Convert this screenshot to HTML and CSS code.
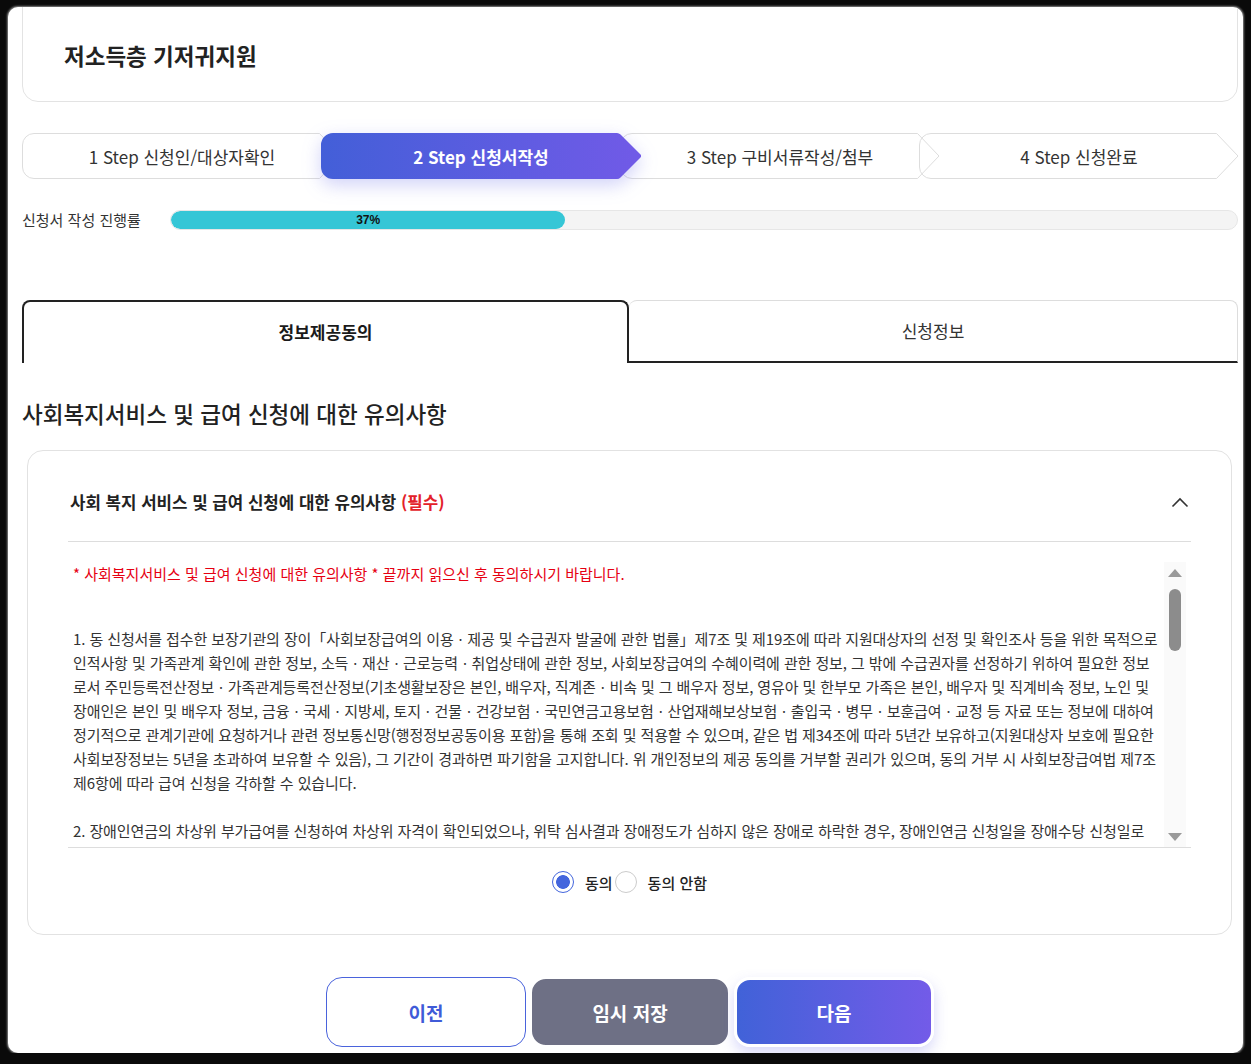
FILE: index.html
```html
<!DOCTYPE html>
<html lang="ko">

<head>
    <meta charset="UTF-8">
    <meta name="viewport" content="width=device-width, initial-scale=1.0">
    <title>저소득층 기저귀지원</title>
    <link rel="stylesheet" href="styles.css">
</head>

<body>
    <div class="frame">
        <div class="page">
            <!-- Title -->
            <div class="title-card">
                <h1>저소득층 기저귀지원</h1>
            </div>

            <!-- Steps -->
            <ol class="steps">
                <li class="step">
                    <svg class="step-shape" width="320" height="46" viewBox="0 0 320 46">
                        <path d="M12 0.5H297.5L319 23L297.5 45.5H12A11.5 11.5 0 0 1 0.5 34V12A11.5 11.5 0 0 1 12 0.5Z" fill="none" stroke="#dddddd" />
                    </svg>
                    <span>1 Step 신청인/대상자확인</span>
                </li>
                <li class="step active">
                    <svg class="step-shape" width="320" height="46" viewBox="0 0 320 46">
                        <defs>
                            <linearGradient id="stepGrad" x1="0" y1="0" x2="1" y2="0">
                                <stop offset="0" stop-color="#435fd8" />
                                <stop offset="1" stop-color="#715ae7" />
                            </linearGradient>
                        </defs>
                        <path d="M12 0H296Q298 0 299.5 1.5L319.5 21.6Q321 23 319.5 24.4L299.5 44.5Q298 46 296 46H12A12 12 0 0 1 0 34V12A12 12 0 0 1 12 0Z" fill="url(#stepGrad)" />
                    </svg>
                    <span>2 Step 신청서작성</span>
                </li>
                <li class="step">
                    <svg class="step-shape" width="320" height="46" viewBox="0 0 320 46">
                        <path d="M12 0.5H297.5L319 23L297.5 45.5H12A11.5 11.5 0 0 1 0.5 34V12A11.5 11.5 0 0 1 12 0.5Z" fill="none" stroke="#dddddd" />
                    </svg>
                    <span>3 Step 구비서류작성/첨부</span>
                </li>
                <li class="step">
                    <svg class="step-shape" width="320" height="46" viewBox="0 0 320 46">
                        <path d="M12 0.5H297.5L319 23L297.5 45.5H12A11.5 11.5 0 0 1 0.5 34V12A11.5 11.5 0 0 1 12 0.5Z" fill="none" stroke="#dddddd" />
                    </svg>
                    <span>4 Step 신청완료</span>
                </li>
            </ol>

            <!-- Progress -->
            <div class="progress">
                <span class="progress-label">신청서 작성 진행률</span>
                <div class="progress-bar">
                    <div class="progress-fill" style="width: 37%;">37%</div>
                </div>
            </div>

            <!-- Tabs -->
            <div class="tabs">
                <button class="tab active">정보제공동의</button>
                <button class="tab">신청정보</button>
            </div>

            <h2 class="section-title">사회복지서비스 및 급여 신청에 대한 유의사항</h2>

            <!-- Agreement card -->
            <div class="agree-card">
                <div class="agree-head">
                    <h3>사회 복지 서비스 및 급여 신청에 대한 유의사항 <em>(필수)</em></h3>
                    <svg class="chevron" width="18" height="12" viewBox="0 0 18 12">
                        <polyline points="1.5,10.5 9,3 16.5,10.5" fill="none" stroke="#333333" stroke-width="1.6" />
                    </svg>
                </div>
                <div class="agree-body">
                    <div class="agree-scroll">
                        <p class="notice">* 사회복지서비스 및 급여 신청에 대한 유의사항 * 끝까지 읽으신 후 동의하시기 바랍니다.</p>
                        <p>1. 동 신청서를 접수한 보장기관의 장이「사회보장급여의 이용ㆍ제공 및 수급권자 발굴에 관한 법률」제7조 및 제19조에 따라 지원대상자의 선정 및 확인조사 등을 위한 목적으로<br>인적사항 및 가족관계 확인에 관한 정보, 소득ㆍ재산ㆍ근로능력ㆍ취업상태에 관한 정보, 사회보장급여의 수혜이력에 관한 정보, 그 밖에 수급권자를 선정하기 위하여 필요한 정보<br>로서 주민등록전산정보ㆍ가족관계등록전산정보(기초생활보장은 본인, 배우자, 직계존ㆍ비속 및 그 배우자 정보, 영유아 및 한부모 가족은 본인, 배우자 및 직계비속 정보, 노인 및<br>장애인은 본인 및 배우자 정보, 금융ㆍ국세ㆍ지방세, 토지ㆍ건물ㆍ건강보험ㆍ국민연금고용보험ㆍ산업재해보상보험ㆍ출입국ㆍ병무ㆍ보훈급여ㆍ교정 등 자료 또는 정보에 대하여<br>정기적으로 관계기관에 요청하거나 관련 정보통신망(행정정보공동이용 포함)을 통해 조회 및 적용할 수 있으며, 같은 법 제34조에 따라 5년간 보유하고(지원대상자 보호에 필요한<br>사회보장정보는 5년을 초과하여 보유할 수 있음), 그 기간이 경과하면 파기함을 고지합니다. 위 개인정보의 제공 동의를 거부할 권리가 있으며, 동의 거부 시 사회보장급여법 제7조<br>제6항에 따라 급여 신청을 각하할 수 있습니다.</p>
                        <p>2. 장애인연금의 차상위 부가급여를 신청하여 차상위 자격이 확인되었으나, 위탁 심사결과 장애정도가 심하지 않은 장애로 하락한 경우, 장애인연금 신청일을 장애수당 신청일로<br>보아 장애수당 지급 여부를 결정하는 것에 동의합니다.</p>
                        <p>3. 신청한 급여의 수급자로 결정된 이후에도 보장기관의 장이 정기적으로 실시하는 확인조사에 성실히 응하여야 하며, 소득ㆍ재산ㆍ가구원 등의 변동사항이 있는 경우에는 지체 없이 관할 읍ㆍ면ㆍ동 주민센터 또는 시ㆍ군ㆍ구청에 신고하여야 합니다.</p>
                        <p>4. 거짓이나 그 밖의 부정한 방법으로 급여를 받거나 타인으로 하여금 급여를 받게 한 경우에는 관계 법령에 따라 지급된 급여가 환수되며, 벌칙이 적용될 수 있습니다.</p>
                        <p>5. 신청서에 기재한 내용과 제출한 서류가 사실과 다를 경우 급여의 결정이 취소되거나 지급이 중지될 수 있으며, 이에 따른 불이익은 신청인에게 있음을 확인합니다.</p>
                        <p>6. 저소득층 기저귀 지원 사업은 예산의 범위 내에서 지원되며, 지원 기준 및 금액은 해당 연도 사업지침에 따라 변경될 수 있습니다.</p>
                    </div>
                    <div class="scrollbar" aria-hidden="true">
                        <span class="sb-up"></span>
                        <span class="sb-thumb"></span>
                        <span class="sb-down"></span>
                    </div>
                </div>
                <div class="agree-radios">
                    <label class="radio">
                        <input type="radio" name="agree" checked>
                        <span>동의</span>
                    </label>
                    <label class="radio">
                        <input type="radio" name="agree">
                        <span>동의 안함</span>
                    </label>
                </div>
            </div>

            <!-- Buttons -->
            <div class="actions">
                <button class="btn btn-prev">이전</button>
                <button class="btn btn-save">임시 저장</button>
                <button class="btn btn-next">다음</button>
            </div>
        </div>
    </div>
</body>

</html>
```

FILE: styles.css
```css
body {
    margin: 0;
    padding: 0;
    background-color: #0a0a0a;
    font-family: "Noto Sans CJK KR", "Noto Sans", sans-serif;
    color: #222222;
}

.frame {
    width: 1235px;
    height: 1046px;
    margin: 7px 0 0 8px;
    background-color: #ffffff;
    border-radius: 10px;
    overflow: hidden;
    box-shadow: 0 0 2px 1px rgba(255, 255, 255, 0.5);
}

.page {
    padding: 0 5px 0 14px;
}
/* Title */

.title-card {
    box-sizing: border-box;
    height: 125px;
    margin-top: -30px;
    padding: 0 41px 30px;
    display: flex;
    align-items: flex-end;
    border: 1px solid #e3e3e3;
    border-radius: 16px;
}

.title-card h1 {
    margin: 0;
    font-size: 22.5px;
    line-height: 32px;
    font-weight: bold;
    color: #222222;
}
/* Steps */

.steps {
    display: flex;
    margin: 31px 0 0;
    padding: 0;
    list-style: none;
}

.step {
    position: relative;
    flex: none;
    width: 320px;
    height: 46px;
    display: flex;
    align-items: center;
    justify-content: center;
    font-size: 17px;
    color: #333333;
    z-index: 2;
}

.step + .step {
    margin-left: -21px;
}

.step:first-child {
    z-index: 3;
}

.step:last-child {
    z-index: 1;
}

.step.active {
    z-index: 5;
    color: #ffffff;
    font-weight: bold;
}

.step-shape {
    position: absolute;
    top: 0;
    left: 0;
}

.step.active .step-shape {
    filter: drop-shadow(0 6px 9px rgba(90, 92, 230, 0.28));
}

.step span {
    position: relative;
}
/* Progress */

.progress {
    display: flex;
    align-items: center;
    margin-top: 30px;
}

.progress-label {
    width: 148px;
    font-size: 15px;
    color: #333333;
}

.progress-bar {
    flex: 1;
    box-sizing: border-box;
    height: 20px;
    background-color: #f4f4f4;
    border: 1px solid #e6e6e6;
    border-radius: 10px;
    overflow: hidden;
}

.progress-fill {
    height: 100%;
    background-color: #35c6d6;
    border-radius: 10px;
    font-family: "Liberation Sans", Arial, sans-serif;
    font-size: 12px;
    font-weight: bold;
    line-height: 18px;
    text-align: center;
    color: #111111;
}
/* Tabs */

.tabs {
    display: flex;
    margin-top: 70px;
}

.tab {
    flex: 1;
    box-sizing: border-box;
    height: 63px;
    padding: 0 0 2px;
    background: none;
    font-family: inherit;
    font-size: 17px;
    color: #333333;
    border: 1px solid #dddddd;
    border-left: none;
    border-bottom: 2px solid #222222;
    border-radius: 8px 8px 0 0;
    cursor: pointer;
}

.tab.active {
    flex: none;
    width: 607px;
    border: 2px solid #222222;
    border-bottom: none;
    font-weight: bold;
    color: #1a1a1a;
}

.section-title {
    margin: 34px 0 21px;
    font-size: 22.5px;
    line-height: 32px;
    font-weight: 500;
    color: #222222;
}
/* Agreement card */

.agree-card {
    margin: 0 6px 0 5px;
    padding: 0 40px;
    border: 1px solid #e2e2e2;
    border-radius: 16px;
}

.agree-head {
    display: flex;
    justify-content: space-between;
    align-items: center;
    padding: 39px 2px 27px;
    border-bottom: 1px solid #dddddd;
}

.agree-head h3 {
    margin: 0;
    font-size: 16.8px;
    line-height: 24px;
    font-weight: bold;
    color: #222222;
}

.agree-head em {
    font-style: normal;
    color: #e3212a;
}

.agree-body {
    display: flex;
    padding: 20px 5px 0;
    border-bottom: 1px solid #dddddd;
}

.agree-scroll {
    flex: 1;
    height: 285px;
    overflow-y: auto;
    scrollbar-width: none;
    font-size: 15px;
    line-height: 24px;
    letter-spacing: -0.1px;
    color: #333333;
}

.agree-scroll p {
    margin: 0 0 24px;
}

.agree-scroll .notice {
    margin-bottom: 41px;
    letter-spacing: 0;
    color: #e60012;
}
/* Scrollbar */

.scrollbar {
    width: 22px;
    height: 285px;
    display: flex;
    flex-direction: column;
    align-items: center;
    background-color: #fafafa;
}

.sb-up,
.sb-down {
    width: 0;
    height: 0;
    border-left: 7px solid transparent;
    border-right: 7px solid transparent;
}

.sb-up {
    margin-top: 7px;
    border-bottom: 8px solid #9a9a9a;
}

.sb-thumb {
    width: 12px;
    height: 62px;
    margin-top: 12px;
    border-radius: 6px;
    background-color: #8c8c8c;
}

.sb-down {
    margin-top: auto;
    margin-bottom: 6px;
    border-top: 8px solid #9a9a9a;
}
/* Radios */

.agree-radios {
    display: flex;
    justify-content: center;
    gap: 2px;
    padding: 23px 0 41px;
}

.radio {
    display: flex;
    align-items: center;
    gap: 11px;
    font-size: 15px;
    font-weight: 500;
    color: #222222;
    cursor: pointer;
}

.radio input {
    appearance: none;
    width: 22px;
    height: 22px;
    margin: 0;
    border: 1px solid #cccccc;
    border-radius: 50%;
    background-color: #ffffff;
}

.radio input:checked {
    border: 1.5px solid #4466dd;
    background: radial-gradient(circle, #4466dd 0 6.5px, #ffffff 7.2px);
}
/* Buttons */

.actions {
    display: flex;
    justify-content: center;
    gap: 4px;
    margin-top: 42px;
}

.btn {
    box-sizing: border-box;
    width: 200px;
    height: 70px;
    font-family: inherit;
    font-size: 19px;
    font-weight: bold;
    border-radius: 16px;
    cursor: pointer;
}

.btn-prev {
    background-color: #ffffff;
    border: 1px solid #4a63dc;
    color: #3f5bd8;
}

.btn-save {
    background-color: #6e7085;
    border: 2px solid #ffffff;
    color: #ffffff;
}

.btn-next {
    background: linear-gradient(90deg, #4162d8, #735be8);
    border: 3px solid #ffffff;
    color: #ffffff;
    box-shadow: 0 6px 14px rgba(100, 100, 230, 0.25);
}
```
